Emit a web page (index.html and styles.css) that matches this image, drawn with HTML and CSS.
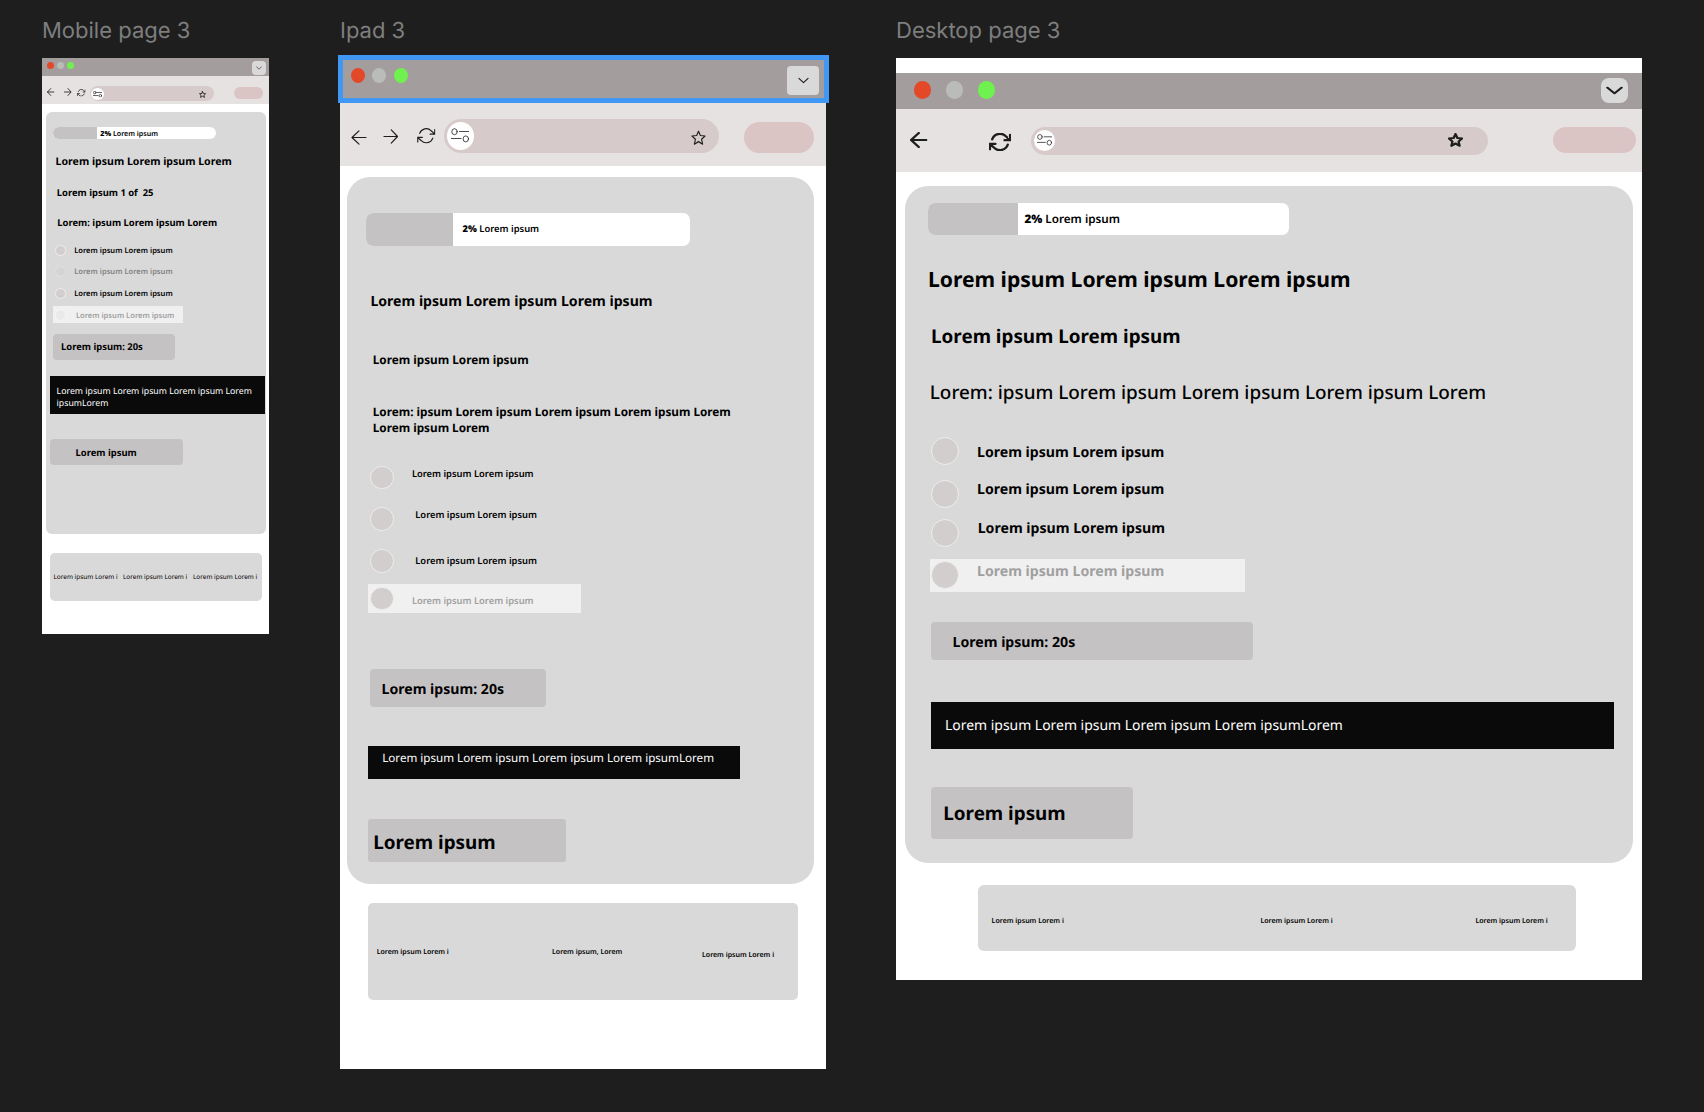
FILE: index.html
```
<!DOCTYPE html>
<html lang="en">
<head>
<meta charset="utf-8">
<title>Page 3 frames</title>
<link rel="stylesheet" href="styles.css">
</head>
<body>
<svg class="defs" aria-hidden="true">
  <symbol id="back" viewBox="0 0 16 16" preserveAspectRatio="none"><path d="M15 8H1M8 1L1 8l7 7"/></symbol>
  <symbol id="forward" viewBox="0 0 16 16" preserveAspectRatio="none"><path d="M1 8h14M8.5 1l6.5 7-6.5 7"/></symbol>
  <symbol id="reload" viewBox="0 2 24 20" preserveAspectRatio="none"><path d="M23 4v6h-6M1 20v-6h6M3.5 9a9 9 0 0 1 14.9-3.4L23 10M1 14l4.6 4.4A9 9 0 0 0 20.500 15"/></symbol>
  <symbol id="star" viewBox="0 0 16 16" preserveAspectRatio="none"><path d="M8 1.200l2 4.500 5 .5-3.700 3.400 1.100 5L8 12l-4.400 2.600 1.100-5L1 6.200l5-.5z"/></symbol>
  <symbol id="chevron" viewBox="0 0 12 8" preserveAspectRatio="none"><path d="M1 1.500l5 5 5-5"/></symbol>
  <symbol id="controls" viewBox="0 0 18 15" preserveAspectRatio="none"><ellipse cx="3.500" cy="3.700" rx="2.700" ry="3"/><ellipse cx="14.800" cy="10.900" rx="2.700" ry="3"/><path d="M8.500 3.500H18M0 10.500h10"/></symbol>
</svg>

<main class="canvas">
  <section class="artboard mobile">
    <h2 class="frame-name">Mobile page 3</h2>
    <div class="frame">
      <header class="titlebar">
        <i class="dot red"></i><i class="dot grey"></i><i class="dot green"></i>
        <span class="dropdown"><svg><use href="#chevron"/></svg></span>
      </header>
      <nav class="toolbar">
        <svg class="icon back"><use href="#back"/></svg>
        <svg class="icon forward"><use href="#forward"/></svg>
        <svg class="icon reload"><use href="#reload"/></svg>
        <div class="url"><span class="site"><svg><use href="#controls"/></svg></span><svg class="star"><use href="#star"/></svg></div>
        <span class="pill"></span>
      </nav>
      <div class="panel">
        <div class="progress"><span class="fill"></span><span class="value"><b>2%</b> Lorem ipsum</span></div>
        <h1 class="heading">Lorem ipsum Lorem ipsum Lorem</h1>
        <p class="sub">Lorem ipsum 1 of  25</p>
        <p class="question">Lorem: ipsum Lorem ipsum Lorem</p>
        <ul class="options">
          <li><i class="radio"></i><span>Lorem ipsum Lorem ipsum</span></li>
          <li class="faded"><i class="radio"></i><span>Lorem ipsum Lorem ipsum</span></li>
          <li><i class="radio"></i><span>Lorem ipsum Lorem ipsum</span></li>
          <li class="active"><i class="radio"></i><span>Lorem ipsum Lorem ipsum</span></li>
        </ul>
        <div class="timer">Lorem ipsum: 20s</div>
        <div class="notice">Lorem ipsum Lorem ipsum Lorem ipsum Lorem<br>ipsumLorem</div>
        <div class="next">Lorem ipsum</div>
      </div>
      <footer class="links"><span>Lorem ipsum Lorem i</span><span>Lorem ipsum Lorem i</span><span>Lorem ipsum Lorem i</span></footer>
    </div>
  </section>

  <section class="artboard ipad">
    <h2 class="frame-name">Ipad 3</h2>
    <div class="frame">
      <header class="titlebar">
        <i class="dot red"></i><i class="dot grey"></i><i class="dot green"></i>
        <span class="dropdown"><svg><use href="#chevron"/></svg></span>
        <span class="selection"></span>
      </header>
      <nav class="toolbar">
        <svg class="icon back"><use href="#back"/></svg>
        <svg class="icon forward"><use href="#forward"/></svg>
        <svg class="icon reload"><use href="#reload"/></svg>
        <div class="url"><span class="site"><svg><use href="#controls"/></svg></span><svg class="star"><use href="#star"/></svg></div>
        <span class="pill"></span>
      </nav>
      <div class="panel">
        <div class="progress"><span class="fill"></span><span class="value"><b>2%</b> Lorem ipsum</span></div>
        <h1 class="heading">Lorem ipsum Lorem ipsum Lorem ipsum</h1>
        <p class="sub">Lorem ipsum Lorem ipsum</p>
        <p class="question">Lorem: ipsum Lorem ipsum Lorem ipsum Lorem ipsum Lorem<br>Lorem ipsum Lorem</p>
        <ul class="options">
          <li><i class="radio"></i><span>Lorem ipsum Lorem ipsum</span></li>
          <li><i class="radio"></i><span>Lorem ipsum Lorem ipsum</span></li>
          <li><i class="radio"></i><span>Lorem ipsum Lorem ipsum</span></li>
          <li class="active"><i class="radio"></i><span>Lorem ipsum Lorem ipsum</span></li>
        </ul>
        <div class="timer">Lorem ipsum: 20s</div>
        <div class="notice">Lorem ipsum Lorem ipsum Lorem ipsum Lorem ipsumLorem</div>
        <div class="next">Lorem ipsum</div>
      </div>
      <footer class="links"><span>Lorem ipsum Lorem i</span><span>Lorem ipsum, Lorem</span><span>Lorem ipsum Lorem i</span></footer>
    </div>
  </section>

  <section class="artboard desktop">
    <h2 class="frame-name">Desktop page 3</h2>
    <div class="frame">
      <header class="titlebar">
        <i class="dot red"></i><i class="dot grey"></i><i class="dot green"></i>
        <span class="dropdown"><svg><use href="#chevron"/></svg></span>
      </header>
      <nav class="toolbar">
        <svg class="icon back"><use href="#back"/></svg>
        <svg class="icon reload"><use href="#reload"/></svg>
        <div class="url"><span class="site"><svg><use href="#controls"/></svg></span><svg class="star"><use href="#star"/></svg></div>
        <span class="pill"></span>
      </nav>
      <div class="panel">
        <div class="progress"><span class="fill"></span><span class="value"><b>2%</b> Lorem ipsum</span></div>
        <h1 class="heading">Lorem ipsum Lorem ipsum Lorem ipsum</h1>
        <p class="sub">Lorem ipsum Lorem ipsum</p>
        <p class="question">Lorem: ipsum Lorem ipsum Lorem ipsum Lorem ipsum Lorem</p>
        <ul class="options">
          <li><i class="radio"></i><span>Lorem ipsum Lorem ipsum</span></li>
          <li><i class="radio"></i><span>Lorem ipsum Lorem ipsum</span></li>
          <li><i class="radio"></i><span>Lorem ipsum Lorem ipsum</span></li>
          <li class="active"><i class="radio"></i><span>Lorem ipsum Lorem ipsum</span></li>
        </ul>
        <div class="timer">Lorem ipsum: 20s</div>
        <div class="notice">Lorem ipsum Lorem ipsum Lorem ipsum Lorem ipsumLorem</div>
        <div class="next">Lorem ipsum</div>
      </div>
      <footer class="links"><span>Lorem ipsum Lorem i</span><span>Lorem ipsum Lorem i</span><span>Lorem ipsum Lorem i</span></footer>
    </div>
  </section>
</main>
</body>
</html>
```
FILE: styles.css
```
* { box-sizing: border-box; margin: 0; padding: 0; }
body { background: #1e1e1e; font-family: "Noto Sans", sans-serif; color: #000; overflow: hidden; text-rendering: geometricPrecision; }
.defs { display: none; }
svg { display: block; fill: none; stroke: #1e1e1e; stroke-linejoin: round; stroke-linecap: round; overflow: visible; }

/* Canvas and frames */
.canvas { position: relative; width: 1704px; height: 1112px; }
.artboard { position: absolute; top: 16.500px; }
.artboard.mobile { left: 42px; }
.artboard.ipad { left: 340px; }
.artboard.desktop { left: 896px; }
.frame-name { height: 41px; font: 400 22px/28px Inter, sans-serif; color: #7e7e7e; white-space: nowrap; }
.frame { background: #fff; display: flex; flex-direction: column; }

/* Browser chrome */
.titlebar { display: flex; align-items: flex-start; background: #a39e9d; position: relative; flex: none; }
.dot { border-radius: 50%; flex: none; }
.red { background: #e34829; }
.grey { background: #b9bcb8; }
.green { background: #6ff14f; }
.dropdown { margin-left: auto; background: #d9d9d9; display: flex; align-items: center; justify-content: center; }
.toolbar { display: flex; align-items: flex-start; background: #e6e2e1; flex: none; }
.icon { flex: none; }
.url { display: flex; align-items: flex-start; background: #d7caca; flex: none; }
.site { background: #fff; border-radius: 50%; display: flex; align-items: center; justify-content: center; }
.star { margin-left: auto; }
.pill { background: #dbc4c4; border-radius: 40px; flex: none; }

/* Quiz panel */
.panel { background: #d9d9d9; display: flex; flex-direction: column; align-items: flex-start; flex: none; white-space: nowrap; }
.panel > * { flex: none; }
.progress { display: flex; background: #fff; overflow: hidden; font-weight: 600; }
.fill { background: #c5c2c3; flex: none; }
.heading, .sub, .question, .timer, .next { font-weight: 700; }
.sub { white-space: pre; }
.options { list-style: none; }
.options li { display: flex; align-items: flex-start; }
.radio { background: #d2cecd; border: 1px solid #efeded; border-radius: 50%; flex: none; }
.active { background: #f0f0f0; color: #a0a0a0; }
.timer, .next { background: #c5c2c3; }
.notice { background: #0a0a0a; color: #fff; font-weight: 400; }
.links { background: #d9d9d9; display: grid; align-items: start; font-weight: 600; white-space: nowrap; flex: none; }

/* Mobile */
.mobile .frame { width: 227.300px; height: 576.200px; }
.mobile .titlebar { height: 18.500px; padding: 3.500px 3.500px 0 5px; }
.mobile .dot { width: 7px; height: 7px; margin: 1px 3px 0 0; }
.mobile .dropdown { width: 14px; height: 14px; border-radius: 4px; }
.mobile .dropdown svg { width: 6px; height: 4px; stroke-width: 1.200; }
.mobile .toolbar { height: 28.300px; }
.mobile .icon { stroke-width: 1.700; }
.mobile .back { width: 7.500px; height: 8px; margin: 12px 0 0 5px; }
.mobile .forward { width: 7.500px; height: 8px; margin: 12px 0 0 9.700px; }
.mobile .reload { width: 8.500px; height: 7.500px; margin: 13.200px 0 0 5.800px; stroke-width: 2; }
.mobile .url { width: 124px; height: 14.700px; margin: 10.300px 0 0 4px; border-radius: 7.400px; }
.mobile .site { width: 12.700px; height: 12px; margin: 1.500px 0 0 1.300px; }
.mobile .site svg { width: 9px; height: 6.500px; stroke-width: 1.500; }
.mobile .star { width: 7px; height: 7px; margin: 5px 7.700px 0 auto; stroke-width: 1.900; }
.mobile .pill { width: 29.500px; height: 12px; margin: 10.700px 0 0 20px; }
.mobile .panel { width: 220.500px; height: 422px; margin: 7.400px 0 0 3.500px; border-radius: 6px; }
.mobile .progress { width: 163.300px; height: 12.500px; margin: 15px 0 0 7.500px; border-radius: 6.200px; font-size: 7.060px; line-height: 10px; }
.mobile .fill { width: 44px; }
.mobile .value { margin: 2.500px 0 0 3.300px; }
.mobile .heading { font-size: 10.560px; line-height: 14px; margin: 15.900px 0 0 10.100px; }
.mobile .sub { font-size: 9.420px; line-height: 14px; margin: 16.500px 0 0 11.300px; }
.mobile .question { font-size: 9.420px; line-height: 14px; margin: 16.200px 0 0 11.800px; }
.mobile .options { margin: 15px 0 0 7.500px; width: 130px; font-size: 7.570px; line-height: 10px; font-weight: 600; }
.mobile .radio { width: 11.300px; height: 11.300px; margin-left: 2px; }
.mobile li span { margin: 1px 0 0 7.900px; }
.mobile li:nth-child(1) { height: 21.300px; }
.mobile li:nth-child(2) { height: 21.500px; }
.mobile li:nth-child(3) { height: 18.500px; }
.mobile li:nth-child(4) { height: 17px; }
.mobile .faded { opacity: .42; }
.mobile .active .radio { margin-top: 3.300px; background: #ebe9e9; border-color: #f6f6f6; }
.mobile .active span { margin: 5.400px 0 0 9.600px; }
.mobile .timer { width: 122px; height: 26.500px; margin: 10.500px 0 0 7.500px; padding: 6.700px 0 0 8.100px; border-radius: 4px; font-size: 9.420px; line-height: 14px; }
.mobile .notice { width: 214.500px; height: 37.500px; margin: 16.300px 0 0 4.500px; padding: 8.300px 0 0 6.600px; font-size: 8.740px; line-height: 12px; }
.mobile .next { width: 133px; height: 26px; margin: 25.200px 0 0 4.500px; padding: 6.900px 0 0 25.600px; border-radius: 4px; font-size: 9.420px; line-height: 14px; }
.mobile .links { width: 212.500px; height: 48.500px; margin: 19.300px 0 0 7.500px; padding: 19.200px 0 0 4px; border-radius: 5px; grid-template-columns: 69.500px 70px auto; font-size: 6.430px; line-height: 10px; font-weight: 400; }

/* iPad */
.ipad .frame { width: 486px; height: 1011.800px; }
.ipad .titlebar { height: 44px; padding: 8.800px 7px 0 11.200px; }
.ipad .dot { width: 14px; height: 15px; margin: 1.700px 7.200px 0 0; }
.ipad .dropdown { width: 32px; height: 28.500px; border-radius: 4px; padding-left: 1px; }
.ipad .dropdown svg { width: 11px; height: 7px; stroke-width: 1.200; }
.selection { position: absolute; left: -2px; top: -2.500px; width: 490.500px; height: 48px; border: 5px solid #4097f4; }
.ipad .toolbar { height: 64.400px; }
.ipad .icon { stroke-width: 1.200; }
.ipad .back { width: 16px; height: 15px; margin: 28.300px 0 0 11.300px; }
.ipad .forward { width: 15.500px; height: 15px; margin: 27.700px 0 0 16px; }
.ipad .reload { width: 18.500px; height: 15.500px; margin: 26.700px 0 0 18.700px; stroke-width: 1.500; }
.ipad .url { width: 274.900px; height: 34px; margin: 17.500px 0 0 7.900px; border-radius: 17px; }
.ipad .site { width: 27px; height: 27.500px; margin: 3px 0 0 3px; }
.ipad .site svg { width: 18px; height: 15px; stroke-width: .8; }
.ipad .star { width: 15px; height: 15.500px; margin: 10.500px 12.900px 0 auto; stroke-width: 1.200; }
.ipad .pill { width: 70px; height: 31px; margin: 20.500px 0 0 25.400px; }
.ipad .panel { width: 467px; height: 706.700px; margin: 11.100px 0 0 7.200px; border-radius: 23px; }
.ipad .progress { width: 324.500px; height: 32.700px; margin: 36px 0 0 18.700px; border-radius: 7px; font-size: 9.370px; line-height: 14px; }
.ipad .fill { width: 87.500px; }
.ipad .value { margin: 9px 0 0 9.200px; }
.ipad .heading { font-size: 14.100px; line-height: 20px; margin: 45.900px 0 0 23.200px; }
.ipad .sub { font-size: 11.750px; line-height: 16px; margin: 40.400px 0 0 25.600px; }
.ipad .question { font-size: 11.740px; line-height: 16px; margin: 36.400px 0 0 25.600px; }
.ipad .options { margin: 29.300px 0 0 21px; width: 212.500px; font-size: 9.350px; line-height: 14px; font-weight: 600; }
.ipad .radio { width: 23.700px; height: 23.700px; margin-left: 2px; }
.ipad li:nth-child(1) { height: 41.600px; }
.ipad li:nth-child(2) { height: 42px; }
.ipad li:nth-child(3) { height: 35px; }
.ipad li:nth-child(4) { height: 28.400px; }
.ipad li:nth-child(1) span { margin: 1.800px 0 0 18px; }
.ipad li:nth-child(2) span { margin: .8px 0 0 21.400px; }
.ipad li:nth-child(3) span { margin: 5px 0 0 21.400px; }
.ipad li:nth-child(4) span { margin: 10.200px 0 0 18px; }
.ipad .active .radio { margin-top: 2.300px; }
.ipad .timer { width: 175.500px; height: 38px; margin: 56.100px 0 0 23px; padding: 11.100px 0 0 11.400px; border-radius: 4px; font-size: 14.100px; line-height: 20px; }
.ipad .notice { width: 371.500px; height: 32.400px; margin: 39.600px 0 0 21px; padding: 4.900px 0 0 14px; font-size: 11.630px; line-height: 16px; }
.ipad .next { width: 198px; height: 43px; margin: 40.300px 0 0 21px; padding: 9.500px 0 0 5px; border-radius: 3px; font-size: 18.850px; line-height: 26px; }
.ipad .links { width: 430px; height: 96.500px; margin: 19.500px 0 0 28.200px; padding: 45px 0 0 8.500px; border-radius: 5px; grid-template-columns: 175.300px 150px auto; font-size: 7.010px; line-height: 10px; }
.ipad .links span:last-child { margin-top: 2.400px; }

/* Desktop */
.desktop .frame { width: 746px; height: 922.800px; padding-top: 15.300px; }
.desktop .titlebar { height: 36px; padding: 5.300px 14.500px 0 17.500px; }
.desktop .dot { width: 17.700px; height: 17.700px; margin: 3.300px 14.400px 0 0; }
.desktop .dropdown { width: 26.500px; height: 25px; border-radius: 8px; }
.desktop .dropdown svg { width: 17px; height: 9px; stroke-width: 1.700; }
.desktop .toolbar { height: 63.200px; }
.desktop .back { width: 17.500px; height: 16px; margin: 23.500px 0 0 14px; stroke-width: 2.200; }
.desktop .reload { width: 22px; height: 18px; margin: 24px 0 0 61px; stroke-width: 2.600; }
.desktop .url { width: 457.300px; height: 28px; margin: 17.900px 0 0 20.500px; border-radius: 14px; }
.desktop .site { width: 21.500px; height: 21.500px; margin: 3px 0 0 2.500px; }
.desktop .site svg { width: 15px; height: 12px; stroke-width: .9; }
.desktop .star { width: 15px; height: 14px; margin: 6.300px 25px 0 auto; stroke-width: 2.400; }
.desktop .pill { width: 82.700px; height: 26px; margin: 18.200px 0 0 64.900px; }
.desktop .panel { width: 728px; height: 677.500px; margin: 13.600px 0 0 9px; border-radius: 23px; }
.desktop .progress { width: 361.500px; height: 32.400px; margin: 17px 0 0 22.700px; border-radius: 7px; font-size: 11.690px; line-height: 16px; }
.desktop .fill { width: 90px; }
.desktop .value { margin: 9.500px 0 0 6.700px; }
.desktop .heading { font-size: 21.120px; line-height: 30px; margin: 30.500px 0 0 22.900px; }
.desktop .sub { font-size: 18.820px; line-height: 26px; margin: 27.800px 0 0 26.100px; }
.desktop .question { font-size: 18.880px; line-height: 26px; margin: 29.900px 0 0 24.800px; font-weight: 500; }
.desktop .options { margin: 31.800px 0 0 25px; width: 315px; font-size: 14.130px; line-height: 20px; font-weight: 700; }
.desktop .radio { width: 28.300px; height: 28.300px; margin-left: 1px; }
.desktop li:nth-child(1) { height: 42.700px; }
.desktop li:nth-child(2) { height: 39px; }
.desktop li:nth-child(3) { height: 40.500px; }
.desktop li:nth-child(4) { height: 33px; }
.desktop li:nth-child(1) span { margin: 5.800px 0 0 17.700px; }
.desktop li:nth-child(2) span { margin: 0 0 0 17.700px; }
.desktop li:nth-child(3) span { margin: 0 0 0 18.400px; }
.desktop li:nth-child(4) span { margin: 3px 0 0 17.700px; }
.desktop .active .radio { margin-top: 1.900px; }
.desktop .timer { width: 322px; height: 38px; margin: 29.700px 0 0 26px; padding: 10.700px 0 0 21.500px; border-radius: 4px; font-size: 14.130px; line-height: 20px; }
.desktop .notice { width: 683.300px; height: 47.300px; margin: 41.700px 0 0 26px; padding: 14.300px 0 0 14px; font-size: 13.950px; line-height: 20px; }
.desktop .next { width: 202.300px; height: 51.700px; margin: 38.200px 0 0 26px; padding: 13.400px 0 0 12.300px; border-radius: 4px; font-size: 18.840px; line-height: 26px; }
.desktop .links { width: 598.300px; height: 66px; margin: 22.200px 0 0 81.900px; padding: 30.900px 0 0 13.700px; border-radius: 6px; grid-template-columns: 268.800px 215px auto; font-size: 7.020px; line-height: 10px; }
```
